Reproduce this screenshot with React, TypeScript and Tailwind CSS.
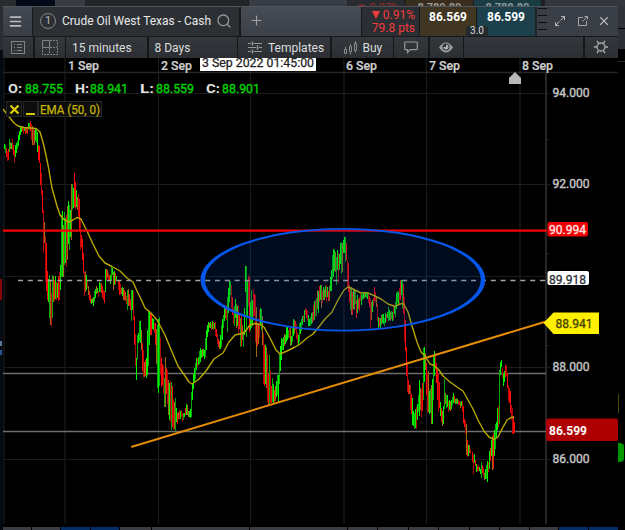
import { Menu, Plus, Search, X } from 'lucide-react';

type Candle = [x: number, high: number, low: number, kind: string];

// x:high:low:kind, where kind is u (up), d (down), U / D (dim up / down), m (mixed)
const PRICE_DATA = `
4:144:149:u 5:145:153:U 6:148:157:d 7:151:161:D 8:149:160:d 9:139:152:U 10:142:149:m 11:143:149:u 12:139:150:D 13:145:155:d
14:150:163:D 15:145:157:u 16:143:153:u 17:141:149:U 18:135:146:u 19:131:140:u 20:127:135:u 21:126:132:u 22:127:131:d 23:128:134:D
24:127:131:u 25:128:134:d 26:127:133:m 27:127:134:d 28:123:129:u 29:123:130:U 30:121:131:d 31:124:140:D 32:126:145:m 33:128:145:D
34:130:145:m 35:128:141:u 36:128:143:U 37:132:152:u 38:145:160:d 39:146:163:d 40:163:185:d 41:173:195:D 42:190:213:d 43:210:253:D
44:222:243:m 45:236:282:D 46:243:291:d 47:271:300:d 48:279:302:u 49:275:318:U 50:280:325:m 51:293:326:D 52:275:318:U 53:276:302:m
54:280:300:d 55:276:299:u 56:282:300:D 57:283:298:u 58:276:301:d 59:272:300:D 60:265:290:u 61:215:277:U 62:211:277:u 63:225:277:m
64:212:265:U 65:218:263:u 66:215:267:D 67:206:260:m 68:201:244:u 69:205:250:U 70:210:237:u 71:184:240:m 72:184:210:U 73:188:208:u
74:173:207:d 75:182:209:d 76:190:207:u 77:197:210:m 78:194:218:D 79:199:230:d 80:218:250:D 81:235:247:d 82:239:260:d 83:253:273:d
84:272:296:D 85:271:292:m 86:275:290:u 87:280:288:D 88:286:295:m 89:291:300:d 90:295:303:d 91:299:304:u 92:298:303:m 93:297:306:u
94:291:302:U 95:289:298:u 96:286:294:m 97:288:293:u 98:291:297:D 99:282:292:u 100:283:292:U 101:283:293:d 102:286:298:d
103:290:300:D 104:291:303:d 105:269:292:u 106:269:280:d 107:270:278:m 108:273:281:D 109:275:281:d 110:275:284:u 111:266:280:U
112:268:275:u 113:272:290:m 114:271:285:u 115:273:284:d 116:276:281:u 117:280:281:d 118:280:290:D 119:281:295:d 120:284:295:D
121:288:294:m 122:287:296:u 123:288:300:m 124:290:300:d 125:292:301:m 126:296:304:D 127:290:310:U 128:289:306:m 129:294:306:d
130:299:310:d 131:290:321:U 132:290:310:u 133:291:320:D 134:316:345:d 135:334:366:D 136:358:380:u 137:335:359:U 138:333:343:u
139:321:341:U 140:321:343:u 141:330:350:m 142:343:371:d 143:350:377:D 144:362:377:m 145:360:376:d 146:358:378:u 147:330:375:u
148:310:366:U 149:312:345:u 150:313:335:d 151:315:335:d 152:318:329:u 153:319:330:u 154:323:333:D 155:323:345:d 156:329:364:m
157:325:388:U 158:319:393:u 159:317:386:U 160:338:375:D 161:358:387:d 162:364:385:d 163:366:393:D 164:378:407:U 165:357:407:m
166:368:394:d 167:370:404:D 168:380:415:m 169:383:420:u 170:381:422:D 171:382:430:U 172:386:427:d 173:399:430:D 174:402:429:m
175:398:431:U 176:408:422:u 177:413:424:d 178:412:419:m 179:410:419:D 180:411:419:u 181:410:417:D 182:413:421:D 183:413:420:U
184:413:417:u 185:408:415:d 186:404:415:u 187:405:415:m 188:411:417:m 189:411:417:u 190:409:418:u 191:392:417:U 192:384:400:u
193:374:389:u 194:368:382:u 195:363:379:U 196:358:370:u 197:358:367:D 198:357:365:u 199:351:364:U 200:348:362:u 201:350:358:u
202:349:357:m 203:349:356:u 204:350:359:u 205:338:357:U 206:330:350:u 207:325:337:u 208:322:332:u 209:323:328:m 210:322:328:u
211:323:330:D 212:321:329:u 213:322:330:D 214:323:329:u 215:322:336:D 216:329:337:d 217:334:344:D 218:339:347:d 219:341:349:m
220:335:349:u 221:325:347:U 222:319:340:u 223:315:328:U 224:305:321:u 225:307:318:m 226:305:320:D 227:297:332:U 228:288:313:u
229:281:302:u 230:281:295:U 231:285:308:D 232:297:315:d 233:308:324:D 234:306:326:U 235:299:318:u 236:304:328:m 237:306:326:u
238:305:333:D 239:314:329:d 240:318:347:U 241:316:346:d 242:325:340:m 243:331:347:U 244:308:335:u 245:266:292:u 246:266:337:U
247:280:318:u 248:275:306:D 249:277:332:d 250:302:330:u 251:290:328:U 252:300:326:u 253:289:317:D 254:294:316:d 255:295:342:D
256:307:357:m 257:323:346:d 258:325:344:m 259:310:338:D 260:308:325:u 261:309:330:U 262:316:345:m 263:333:384:D 264:345:386:d
265:345:384:u 266:347:388:m 267:354:402:D 268:374:405:d 269:355:405:U 270:370:403:D 271:386:403:d 272:378:402:U 273:384:404:u
274:390:402:d 275:386:401:m 276:381:397:u 277:375:395:U 278:375:402:u 279:354:384:U 280:346:371:u 281:338:360:u 282:339:350:U
283:337:350:u 284:334:346:m 285:335:344:u 286:326:342:u 287:326:340:u 288:330:338:U 289:328:338:D 290:328:346:m 291:336:345:u
292:327:342:U 293:319:336:u 294:320:334:m 295:321:330:d 296:324:339:D 297:333:343:D 298:335:346:u 299:323:342:U 300:322:334:u
301:319:331:U 302:316:325:u 303:315:322:D 304:310:322:u 305:308:315:D 306:309:318:d 307:311:321:D 308:315:326:u 309:319:326:u
310:317:326:U 311:313:324:u 312:312:323:m 313:305:321:d 314:301:320:u 315:300:317:D 316:298:316:U 317:290:309:m 318:291:313:u
319:286:302:d 320:285:300:u 321:285:308:m 322:291:303:D 323:287:300:u 324:289:300:m 325:286:297:u 326:285:302:D 327:287:297:u
328:291:301:d 329:286:301:m 330:277:291:u 331:270:291:u 332:255:279:U 333:249:277:u 334:250:271:u 335:252:272:m 336:257:285:U
337:250:270:u 338:253:283:D 339:254:270:u 340:243:264:u 341:242:274:U 342:243:272:m 343:240:253:u 344:237:253:u 345:237:262:U
346:243:260:d 347:260:287:D 348:263:292:d 349:285:302:d 350:288:310:U 351:287:315:m 352:292:315:d 353:289:309:u 354:290:310:m
355:290:304:U 356:300:318:d 357:295:313:u 358:299:309:m 359:297:311:d 360:292:301:D 361:294:305:u 362:293:300:U 363:293:299:u
364:292:298:m 365:292:297:u 366:292:298:U 367:292:299:u 368:294:303:D 369:296:307:d 370:298:330:D 371:302:320:m 372:300:312:u
373:298:306:d 374:287:301:d 375:292:303:D 376:297:307:m 377:304:321:D 378:317:328:u 379:318:327:d 380:318:329:u 381:315:325:m
382:314:323:u 383:314:324:u 384:318:326:U 385:313:323:u 386:314:322:D 387:312:318:u 388:307:321:U 389:310:320:u 390:312:321:m
391:311:319:U 392:312:321:u 393:304:320:D 394:307:314:u 395:302:317:U 396:293:309:u 397:291:303:U 398:292:304:u 399:288:305:D
400:280:300:d 401:280:295:u 402:280:309:U 403:284:314:d 404:297:342:D 405:320:351:d 406:347:376:d 407:362:392:D 408:380:394:d
409:385:394:m 410:385:410:D 411:394:414:d 412:398:425:u 413:411:426:u 414:413:429:U 415:409:428:u 416:407:429:D 417:404:420:u
418:395:412:U 419:380:416:u 420:388:410:m 421:389:417:D 422:383:411:d 423:348:400:U 424:347:382:u 425:353:370:m 426:363:395:d
427:373:413:D 428:371:412:m 429:391:414:u 430:389:413:U 431:385:424:m 432:379:424:u 433:355:400:U 434:351:376:u 435:353:370:D
436:363:383:d 437:370:400:d 438:373:412:D 439:382:408:d 440:402:416:u 441:408:422:d 442:411:426:m 443:406:424:u 444:379:409:U
445:393:404:m 446:395:408:U 447:395:407:u 448:401:412:D 449:400:410:u 450:401:411:m 451:400:409:u 452:397:405:U 453:393:403:u
454:396:403:d 455:399:404:u 456:398:404:m 457:399:404:u 458:400:405:D 459:401:405:d 460:402:408:m 461:401:406:u 462:401:412:D
463:406:423:d 464:419:427:d 465:421:434:D 466:424:455:m 467:440:457:d 468:445:456:u 469:445:453:m 470:449:454:D 472:452:462:d
473:455:474:D 474:454:463:u 475:460:466:d 476:464:472:u 477:466:471:d 478:465:471:D 479:467:471:u 480:469:474:u 481:462:478:U
482:465:473:d 483:467:476:D 484:473:480:m 485:469:479:u 486:465:479:U 487:461:482:u 488:462:472:D 489:451:469:u 490:448:461:d
491:440:456:u 492:436:470:m 493:433:469:d 494:430:456:u 495:424:449:U 496:422:438:u 497:408:430:u 498:406:427:D 499:370:424:U
500:362:375:u 501:360:367:u 502:368:378:D 503:374:386:u 504:371:382:u 505:365:377:d 506:366:376:D 507:373:388:d 508:385:401:D
509:388:403:d 510:391:413:d 511:405:420:D 512:408:434:D 513:416:434:d 514:422:433:d
`;

const candles: Candle[] = PRICE_DATA.trim()
  .split(/\s+/)
  .map((item) => {
    const [x, high, low, kind] = item.split(':');
    return [Number(x), Number(high), Number(low), kind];
  });

const candleColors: Record<string, string> = {
  u: '#00f400',
  U: '#06a80a',
  d: '#ff0808',
  D: '#b40606',
  m: '#a06a18',
};

const EMA_POINTS =
  '3,109 10,118 14,123 18,126 24,127.5 36,128.5 40,132 44,146 48,165 52,188 57,206 60,215 64,219.5 69,222 73,220 77,217.5 81,219 87,231 93,244 99,256 105,263 112,266.5 120,271 127,278 133,282 137,291 141,299 145,308 150,312 157,320 165,335 172,352 178,366 185,376 189,382 192,384 199,379 206,371 214,359 223,353 229,342 235,335 244,333 250,325 255,323.5 260,324.5 264,327 270,338 276,350 280,354 287,351 295,347 300,344 307,338 313,334 318,328 325,319 332,312 338,300 344,290 348,287 353,289 360,292.5 368,293 375,296 381,299 388,304 395,306.5 400,304 403.5,303.5 408,312 412,326 417,342 421,352 425,356 430,364 434,365.5 439,370 443,376 450,382 457,387 463,391 468,400 473,409 478,420 484,431 489,437 494,439.5 498,437 502,429 507,420 512,417 514,418';

const gridX = [4, 65, 158.5, 250.5, 344, 426.5, 520];
const gridY = [93.5, 184.5, 276.5, 367.5, 459.5];

const dates = [
  { x: 68, label: '1 Sep' },
  { x: 161, label: '2 Sep' },
  { x: 346, label: '6 Sep' },
  { x: 429, label: '7 Sep' },
  { x: 522, label: '8 Sep' },
];

const prices = [
  { y: 97, label: '94.000' },
  { y: 188, label: '92.000' },
  { y: 371, label: '88.000' },
  { y: 462.5, label: '86.000' },
];

const ohlc = [
  { x: 8, valueX: 25, name: 'O:', value: '88.755' },
  { x: 75, valueX: 90, name: 'H:', value: '88.941' },
  { x: 140, valueX: 156, name: 'L:', value: '88.559' },
  { x: 206, valueX: 222, name: 'C:', value: '88.901' },
];

const footerCells = [
  'w-[28px] bg-[#3a3c42]', 'w-[28px] bg-[#3a3c42]', 'w-[29px] bg-[#052d68]', 'w-[28px] bg-[#052d68]',
  'w-[31px] bg-[#3a3c42]', 'w-[97px] bg-[#3a3c42]', 'w-[97px] bg-[#3a3c42]', 'w-[29px] bg-[#3a3c42]',
  'w-[30px] bg-[#3a3c42]', 'w-[29px] bg-[#3a3c42]', 'w-[30px] bg-[#3a3c42]', 'w-[29px] bg-[#3a3c42]',
  'w-[29px] bg-[#3a3c42]', 'w-[28px] bg-[#3a3c42]', 'w-[29px] bg-[#052d68]', 'w-[29px] bg-[#052d68]',
];

function PriceChart() {
  return (
    <svg className="block h-[466px] w-[615px] shrink-0 bg-black" viewBox="3 58 615 466" fontFamily="Roboto, 'Liberation Sans', sans-serif">
      {/* Grid */}
      <g stroke="#1c1c1c" strokeWidth="1.2">
        {gridX.map((x) => <line key={x} x1={x} x2={x} y1="58" y2="524" />)}
        {gridY.map((y) => <line key={y} x1="4" x2="550" y1={y} y2={y} />)}
      </g>
      <line x1="3" x2="618" y1="72.5" y2="72.5" stroke="#242424" strokeWidth="1.5" />
      <line x1="546" x2="546" y1="72" y2="524" stroke="#262626" strokeWidth="2" />
      <path d="M546 139.5h3M546 253.5h3M546 345.5h3" stroke="#262626" />

      {/* Date axis */}
      <g fill="#d2d2d2" fontSize="12" fontWeight="500" stroke="#d2d2d2" strokeWidth="0.2">
        {dates.map((d) => (
          <text key={d.label} x={d.x} y="69.500" textLength="31" lengthAdjust="spacingAndGlyphs">{d.label}</text>
        ))}
      </g>
      <rect x="200" y="58" width="116" height="13" fill="#fff" />
      <text x="202" y="67" fontSize="12" fill="#222" stroke="#222" strokeWidth="0.25" textLength="112" lengthAdjust="spacingAndGlyphs">3 Sep 2022 01:45:00</text>
      <path d="M509 84v-6l6-6 6 6v6z" fill="#b9b9b9" />

      {/* Horizontal levels */}
      <path d="M3 373.5H546M3 431.5H546" stroke="#6e6e6e" strokeWidth="1.3" />

      <g shapeRendering="crispEdges">
        {candles.map(([x, high, low, kind]) => (
          <rect key={x} x={x} y={high} width="1" height={low - high} fill={candleColors[kind]} />
        ))}
      </g>
      <polyline points={EMA_POINTS} fill="none" stroke="#b9a800" strokeWidth="1.4" strokeLinejoin="round" />

      <path d="M3 230.7H547" stroke="#f50000" strokeWidth="2.2" />
      <path d="M18 280.5H546" stroke="#a5a5a5" strokeWidth="1.4" strokeDasharray="5 4.85" />
      <path d="M132 446.7L546 321.5" stroke="#e48c08" strokeWidth="2" strokeLinecap="round" />

      {/* Highlighted area, outline thicker on the sides */}
      <ellipse cx="342.9" cy="279.7" rx="140" ry="51" fill="#0040b0" fillOpacity="0.17" />
      <path
        d="M200.500 279.7a142.400 51.8 0 1 0 284.800 0a142.400 51.8 0 1 0 -284.800 0zM205 279.7a137.900 50 0 1 0 275.800 0a137.900 50 0 1 0 -275.800 0z"
        fill="#0556ea"
        fillRule="evenodd"
      />

      {/* OHLC readout */}
      <g fontSize="13.5">
        {ohlc.map((item) => (
          <g key={item.name}>
            <text x={item.x} y="93" fill="#e2e2e2" fontWeight="700" textLength="14" lengthAdjust="spacingAndGlyphs">{item.name}</text>
            <text x={item.valueX} y="93" fill="#00d000" stroke="#00d000" strokeWidth="0.4" textLength="38" lengthAdjust="spacingAndGlyphs">{item.value}</text>
          </g>
        ))}
      </g>

      {/* Indicator label */}
      <g fill="#0d0d0d" stroke="#292929">
        <rect x="6.5" y="101.5" width="15" height="15" />
        <rect x="23.5" y="101.5" width="14" height="15" />
        <rect x="38.5" y="101.5" width="63" height="15" />
      </g>
      <path d="M10.500 105.500l8 8M18.500 105.500l-8 8" stroke="#e0ce00" strokeWidth="2.2" />
      <path d="M26 114h9" stroke="#d8c600" strokeWidth="2" />
      <text x="40" y="113.500" fontSize="12" fill="#c4b400" stroke="#c4b400" strokeWidth="0.25" textLength="60" lengthAdjust="spacingAndGlyphs">EMA (50, 0)</text>

      {/* Price axis */}
      <g fill="#c4c4c4" stroke="#c4c4c4" strokeWidth="0.4" fontSize="12">
        {prices.map((p) => (
          <text key={p.label} x="552.5" y={p.y} textLength="37" lengthAdjust="spacingAndGlyphs">{p.label}</text>
        ))}
      </g>
      <rect x="547.5" y="222" width="40.5" height="14.5" rx="2" fill="#f00000" />
      <text x="549" y="234" fontSize="12" fill="#ffdede" stroke="#ffdede" strokeWidth="0.4" textLength="37" lengthAdjust="spacingAndGlyphs">90.994</text>
      <rect x="547.5" y="271" width="41.5" height="14" rx="2" fill="#fff" />
      <text x="549" y="283.5" fontSize="12" fill="#2c3035" stroke="#2c3035" strokeWidth="0.3" textLength="37" lengthAdjust="spacingAndGlyphs">89.918</text>
      <path d="M543.5 323l10-10.5H599v21.5H553.5z" fill="#fff000" />
      <text x="555.5" y="328" fontSize="12" fill="#4a4500" stroke="#4a4500" strokeWidth="0.35" textLength="37" lengthAdjust="spacingAndGlyphs">88.941</text>
      <rect x="546" y="418.5" width="72" height="22.5" rx="2" fill="#ae0000" />
      <text x="549" y="434.5" fontSize="12" fontWeight="700" fill="#fff" textLength="38" lengthAdjust="spacingAndGlyphs">86.599</text>
    </svg>
  );
}

function TitleBar() {
  return (
    <div className="flex h-[30px] w-full shrink-0 border-t border-[#50545c] bg-[#3a3e46]">
      <div className="flex w-[30px] items-center justify-center border-r border-[#17191c] bg-gradient-to-b from-[#444851] to-[#393d45] pr-1">
        <Menu className="size-[15px] text-[#b9bbbe]" strokeWidth={2.6} />
      </div>
      <div className="flex w-[208px] items-center border-r-2 border-[#17191c] bg-[#2c3034] pb-[2px] pl-[7px]">
        <span className="flex size-4 shrink-0 items-center justify-center rounded-full border border-[#85878a] text-[11px] leading-none text-[#b9bbbd]">1</span>
        <svg className="ml-1.5 h-5 w-[150px] shrink-0" viewBox="0 0 150 20">
          <text x="0" y="14" fontSize="12.500" fill="#e8e9ea" textLength="149" lengthAdjust="spacingAndGlyphs">Crude Oil West Texas - Cash</text>
        </svg>
        <Search className="ml-1 size-4 shrink-0 text-[#94979b]" strokeWidth={2} />
      </div>
      <div className="flex w-[120px] items-center bg-gradient-to-b from-[#474b54] to-[#3c4048] pb-[2px] pl-[8px]">
        <Plus className="size-[15px] text-[#9fa2a8]" strokeWidth={1.8} />
      </div>
      <div className="flex w-[59px] flex-col items-end justify-center border-x border-[#17191c] bg-[#2b2f33] pr-[4px] text-[12px] leading-[13px] text-[#f43c3c]">
        <span className="flex items-center gap-[3px]">
          <span className="border-x-[4px] border-t-[8px] border-x-transparent border-t-[#f43c3c]" />
          0.91%
        </span>
        <span>79.8 pts</span>
      </div>
      <div className="relative flex w-[115px] text-[12px] font-bold text-white">
        <div className="flex w-[57px] justify-center border-r border-[#15191c] bg-[#413621] pt-px">86.569</div>
        <div className="flex w-[58px] justify-center bg-[#1c414c] pt-px">86.599</div>
        <span className="absolute bottom-0 left-[46px] flex h-[10px] w-[22px] items-center justify-center rounded-t-[3px] bg-[#24292d] text-[10px] leading-none font-normal text-[#dedede]">3.0</span>
      </div>
      <div className="flex w-[13px] flex-col items-center gap-[6px] border-l-2 border-[#202327] pt-px">
        <span className="h-px w-[9px] bg-[#0c0e11]" />
        <span className="h-px w-[9px] bg-[#0c0e11]" />
        <span className="h-px w-[9px] bg-[#0c0e11]" />
        <span className="h-px w-[9px] bg-[#0c0e11]" />
      </div>
      <div className="flex flex-1 items-center gap-[13px] pb-px pl-[7px]">
        <svg className="size-[10px]" viewBox="0 0 10 10" fill="none" stroke="#b4b6b9">
          <path d="M6 .5h3.500V4M4 9.500H.5V6M9.500 .5l-4 4M.5 9.500l4-4" />
        </svg>
        <svg className="size-[10px]" viewBox="0 0 10 10" fill="none" stroke="#a4a6a9">
          <path d="M5 1.500H.5v8h8V5M6.500 .5h3v3M9.500 .5l-5 5" />
        </svg>
        <X className="-ml-[4px] size-[14px] text-[#b4b6b9]" strokeWidth={2} />
      </div>
    </div>
  );
}

function Toolbar() {
  return (
    <div className="flex h-[22px] w-full shrink-0 gap-[1.5px] border-t border-[#17191c] bg-[#15171a] text-[12px] text-[#dcdddf] *:flex *:items-center *:bg-gradient-to-b *:from-[#34383c] *:to-[#2b2f33]">
      <div className="w-[30px] justify-center pb-px">
        <svg className="h-[13px] w-[14px]" viewBox="0 0 14 13" fill="none" stroke="#808284">
          <rect x=".5" y=".5" width="13" height="12" />
          <path d="M3 3.5h1M6 3.5h5M3 6.5h1M6 6.5h5M3 9.5h1M6 9.5h5" />
        </svg>
      </div>
      <div className="w-[30px] justify-center pb-px">
        <svg className="h-[15px] w-[16px]" viewBox="0 0 16 15" fill="none" stroke="#808284">
          <path d="M.5 .5h7v7h-7z" />
          <path d="M8 .5h7.5v14H.5V8M8 7.5h7M7.5 8v6" strokeDasharray="2 1" />
        </svg>
      </div>
      <div className="w-[81px] pl-[6px] whitespace-nowrap">15 minutes</div>
      <div className="w-[88px] pl-[6px]">8 Days</div>
      <div className="w-[92px] gap-[6px] pl-[10px]">
        <svg className="h-[13px] w-[14px] shrink-0" viewBox="0 0 14 13" fill="none" stroke="#96989a">
          <path d="M0 2.5h3M6 2.5h8M0 6.5h8M11 6.5h3M0 10.5h3M6 10.5h8" />
          <path d="M4.5 .5v4M9.5 4.5v4M4.5 8.5v4" strokeWidth="1.5" />
        </svg>
        Templates
      </div>
      <div className="w-[61px] gap-[6px] pl-[11px]">
        <svg className="h-[14px] w-[14px] shrink-0" viewBox="0 0 14 14" fill="none" stroke="#8a8c8e">
          <path d="M1.5 8.5h2v4h-2zM6.500 5.5h2v5h-2zM11.5 2.5h2v7h-2zM2.5 6v2M7.500 3v2M7.500 10.5v3M12.5 0v2.5M12.5 9.5v2" />
        </svg>
        Buy
      </div>
      <div className="w-[34px] justify-center">
        <svg className="h-[13px] w-[14px]" viewBox="0 0 14 13" fill="none" stroke="#96989a" strokeWidth="1.2">
          <path d="M1.5 1h11q.8 0 .8.8v6q0 .8-.8.8H6l-2.5 3V8.6h-2Q.7 8.6.7 7.8v-6Q.7 1 1.500 1z" />
        </svg>
      </div>
      <div className="w-[33px] justify-center">
        <svg className="h-[11px] w-[14px]" viewBox="0 0 14 11">
          <path d="M0 5.500Q7-4.500 14 5.500Q7 15.500 0 5.500z" fill="#9a9c9e" />
          <circle cx="7" cy="5" r="3.500" fill="#303438" />
          <path d="M7 2.500A2.500 2.500 0 1 1 4.500 5H7z" fill="#aeb0b2" />
        </svg>
      </div>
      <div className="w-[119px]" />
      <div className="flex-1 justify-center pb-px">
        <svg className="h-[14px] w-[14px]" viewBox="0 0 14 14" fill="none" stroke="#a6a8aa" strokeWidth="1.3">
          <circle cx="7" cy="7" r="4" />
          <path d="M3 .8l1.800 3M11 .8L9.200 3.800M0 7h3M11 7h3M3 13.200l1.800-3M11 13.200l-1.800-3" />
        </svg>
      </div>
    </div>
  );
}

export default function App() {
  return (
    <div className="flex h-[530px] w-[625px] flex-col overflow-hidden bg-black font-[Roboto,'Liberation_Sans',sans-serif]">
      {/* Edge of the window underneath */}
      <div className="flex h-[6px] w-full shrink-0 overflow-hidden bg-[#1d1f22] text-[11px] leading-[15px]">
        <div className="w-4 bg-[#292b2f]" />
        <div className="w-[39px] bg-[#030917]" />
        <div className="w-[30px] bg-[#383c44]" />
        <div className="mr-px w-[163px] bg-[#222427]" />
        <div className="w-[98px] bg-[#383c44]" />
        <div className="w-[57px] bg-[#272a2e] pl-[9px] whitespace-nowrap text-[#a12d2d]">▼ 0.97%</div>
        <div className="ml-0.5 w-[67px] bg-[#392e1d] text-center font-bold text-[#9a9890]">8,780.80</div>
        <div className="ml-px w-[67px] bg-[#193b44] text-center font-bold text-[#8a9b9f]">8,788.80</div>
        <div className="ml-1 flex-1 bg-[#33363d]" />
      </div>

      <div className="flex min-h-0 flex-1">
        <div className="flex w-[3px] shrink-0 flex-col bg-[#050a12]">
          <div className="h-[44px] bg-[#2a2d31]" />
          <div className="mt-[229px] h-[21px] w-0.5 bg-[#870606]" />
          <div className="mt-[41px] h-[5px] w-0.5 bg-[#5d7497]" />
          <div className="mt-1 h-[5px] w-0.5 bg-[#2b5791]" />
        </div>
        <div className="flex w-[615px] shrink-0 flex-col">
          <TitleBar />
          <Toolbar />
          <PriceChart />
          <div className="mt-[3px] flex h-[3px] gap-px">
            {footerCells.map((cell, i) => <div key={i} className={`shrink-0 ${cell}`} />)}
          </div>
        </div>
        <div className="flex flex-1 flex-col">
          <div className="h-[22px] bg-[#30333a]" />
          <div className="mt-px h-[20px] bg-[#2c2f35]" />
          <div className="mt-3 h-px bg-[#202327]" />
          <div className="mt-[332px] h-[19px] w-px bg-[#514800]" />
          <div className="mt-[30px] h-[19px] w-[6px] rounded-r-sm bg-[#009800]" />
        </div>
      </div>
    </div>
  );
}
